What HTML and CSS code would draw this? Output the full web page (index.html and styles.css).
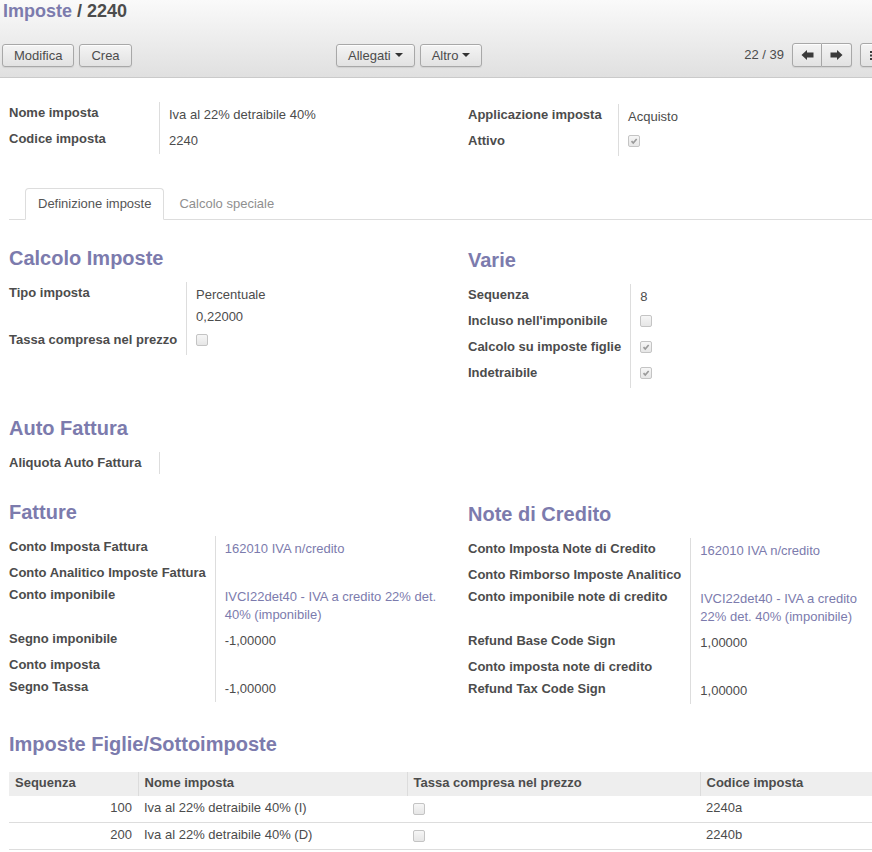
FILE: index.html
```html
<!DOCTYPE html>
<html lang="it">
<head>
<meta charset="utf-8">
<title>Imposte / 2240</title>
<link rel="stylesheet" href="styles.css">
</head>
<body>
<div class="header">
  <div class="header-inner">
    <h1 class="title"><a class="crumb">Imposte</a> / 2240</h1>
    <div class="toolbar">
      <div class="tb-left">
        <button class="btn">Modifica</button>
        <button class="btn">Crea</button>
      </div>
      <div class="tb-mid">
        <button class="btn">Allegati <span class="caret"></span></button>
        <button class="btn">Altro <span class="caret"></span></button>
      </div>
      <div class="tb-right">
        <span class="pager-val">22 / 39</span>
        <div class="btn-group">
          <button class="btn gbtn"><svg class="arrow" viewBox="0 0 12 10"><path d="M0 5 L5.5 0 L5.5 2.6 L12 2.6 L12 7.4 L5.5 7.4 L5.5 10 Z"/></svg></button>
          <button class="btn gbtn"><svg class="arrow" viewBox="0 0 12 10"><path d="M12 5 L6.5 0 L6.5 2.6 L0 2.6 L0 7.4 L6.5 7.4 L6.5 10 Z"/></svg></button>
        </div>
        <div class="btn-group">
          <button class="btn gbtn sw"><svg class="list" viewBox="0 0 10 9"><rect x="0" y="0" width="10" height="2"/><rect x="0" y="3.5" width="10" height="2"/><rect x="0" y="7" width="10" height="2"/></svg></button>
          <button class="btn gbtn sw"></button>
        </div>
      </div>
    </div>
  </div>
</div>

<div class="sheet">
  <div class="group2">
    <div class="col col-left">
      <div class="fields">
        <div class="lbl">Nome imposta</div><div class="val">Iva al 22% detraibile 40%</div>
        <div class="lbl">Codice imposta</div><div class="val">2240</div>
      </div>
    </div>
    <div class="col col-right">
      <div class="fields">
        <div class="lbl">Applicazione imposta</div><div class="val">Acquisto</div>
        <div class="lbl">Attivo</div><div class="val"><span class="cb on"><svg viewBox="0 0 12 12"><path d="M3 6.2 L5.1 8.4 L9.2 3.6"/></svg></span></div>
      </div>
    </div>
  </div>

  <ul class="tabs">
    <li class="tab active">Definizione imposte</li>
    <li class="tab">Calcolo speciale</li>
  </ul>

  <div class="page">
    <div class="group2">
      <div class="col col-left">
        <h2 class="sec-title">Calcolo Imposte</h2>
        <div class="fields">
          <div class="lbl">Tipo imposta</div>
          <div class="val val-tight"><div>Percentuale</div><div class="second">0,22000</div></div>
          <div class="lbl">Tassa compresa nel prezzo</div><div class="val"><span class="cb"></span></div>
        </div>
      </div>
      <div class="col col-right">
        <h2 class="sec-title">Varie</h2>
        <div class="fields">
          <div class="lbl">Sequenza</div><div class="val">8</div>
          <div class="lbl">Incluso nell'imponibile</div><div class="val"><span class="cb"></span></div>
          <div class="lbl">Calcolo su imposte figlie</div><div class="val"><span class="cb on"><svg viewBox="0 0 12 12"><path d="M3 6.2 L5.1 8.4 L9.2 3.6"/></svg></span></div>
          <div class="lbl">Indetraibile</div><div class="val"><span class="cb on"><svg viewBox="0 0 12 12"><path d="M3 6.2 L5.1 8.4 L9.2 3.6"/></svg></span></div>
        </div>
      </div>
    </div>

    <div class="section section-auto">
      <h2 class="sec-title">Auto Fattura</h2>
      <div class="fields">
        <div class="lbl">Aliquota Auto Fattura</div><div class="val"></div>
      </div>
    </div>

    <div class="group2 section section-inv">
      <div class="col col-left">
        <h2 class="sec-title">Fatture</h2>
        <div class="fields">
          <div class="lbl">Conto Imposta Fattura</div><div class="val"><a class="link">162010 IVA n/credito</a></div>
          <div class="lbl">Conto Analitico Imposte Fattura</div><div class="val"></div>
          <div class="lbl">Conto imponibile</div><div class="val"><a class="link">IVCI22det40 - IVA a credito 22% det. 40% (imponibile)</a></div>
          <div class="lbl">Segno imponibile</div><div class="val">-1,00000</div>
          <div class="lbl">Conto imposta</div><div class="val"></div>
          <div class="lbl">Segno Tassa</div><div class="val">-1,00000</div>
        </div>
      </div>
      <div class="col col-right">
        <h2 class="sec-title">Note di Credito</h2>
        <div class="fields">
          <div class="lbl">Conto Imposta Note di Credito</div><div class="val"><a class="link">162010 IVA n/credito</a></div>
          <div class="lbl">Conto Rimborso Imposte Analitico</div><div class="val"></div>
          <div class="lbl">Conto imponibile note di credito</div><div class="val"><a class="link">IVCI22det40 - IVA a credito 22% det. 40% (imponibile)</a></div>
          <div class="lbl">Refund Base Code Sign</div><div class="val">1,00000</div>
          <div class="lbl">Conto imposta note di credito</div><div class="val"></div>
          <div class="lbl">Refund Tax Code Sign</div><div class="val">1,00000</div>
        </div>
      </div>
    </div>

    <div class="section section-last">
      <h2 class="sec-title list-title">Imposte Figlie/Sottoimposte</h2>
      <table class="list">
        <colgroup><col class="c1"><col class="c2"><col class="c3"><col></colgroup>
        <thead>
          <tr><th>Sequenza</th><th>Nome imposta</th><th>Tassa compresa nel prezzo</th><th>Codice imposta</th></tr>
        </thead>
        <tbody>
          <tr><td class="num">100</td><td>Iva al 22% detraibile 40% (I)</td><td><span class="cb cb-list"></span></td><td>2240a</td></tr>
          <tr><td class="num">200</td><td>Iva al 22% detraibile 40% (D)</td><td><span class="cb cb-list"></span></td><td>2240b</td></tr>
        </tbody>
      </table>
    </div>
  </div>
</div>
</body>
</html>
```

FILE: styles.css
```css
* { box-sizing: border-box; }

html, body {
  margin: 0;
  padding: 0;
  overflow: hidden;
  background: #ffffff;
}

body {
  font-family: "Liberation Sans", Arial, sans-serif;
  font-size: 13px;
  line-height: 18px;
  color: #4c4c4c;
}

/* ---------- header ---------- */
.header {
  width: 100%;
  height: 78px;
  overflow: hidden;
  background: linear-gradient(to bottom, #fafafa, #e0e0e0);
  border-bottom: 1px solid #cacaca;
}

.header-inner {
  width: 916px;
  padding: 0 4px 0 2px;
}

.title {
  margin: 0 0 0 1px;
  font-size: 18px;
  line-height: 22px;
  font-weight: bold;
  color: #4c4c4c;
}

.crumb { color: #7c7bad; }

.toolbar {
  display: grid;
  grid-template-columns: 334px 1fr auto;
  align-items: center;
  margin-top: 21px;
  height: 23px;
}

.tb-left, .tb-mid {
  display: flex;
  gap: 5px;
}

.tb-right {
  display: flex;
  align-items: center;
}

.pager-val {
  margin-right: 8px;
  color: #4c4c4c;
}

.btn {
  height: 23px;
  padding: 0 11px;
  font-family: "Liberation Sans", Arial, sans-serif;
  font-size: 13px;
  color: #4c4c4c;
  background: linear-gradient(to bottom, #f4f4f4, #e2e2e2);
  border: 1px solid #a8a8a8;
  border-radius: 3px;
  box-shadow: 0 1px 1px rgba(0, 0, 0, 0.08), inset 0 1px 0 rgba(255, 255, 255, 0.8);
  display: inline-flex;
  align-items: center;
  gap: 4px;
}

.caret {
  display: inline-block;
  width: 0;
  height: 0;
  border-left: 4px solid transparent;
  border-right: 4px solid transparent;
  border-top: 4px solid #333;
}

.btn-group {
  display: flex;
  height: 24px;
}

.btn-group + .btn-group { margin-left: 8px; }

.gbtn {
  height: 24px;
  width: 30px;
  padding: 0;
  justify-content: center;
  border-radius: 0;
}

.gbtn:first-child { border-radius: 3px 0 0 3px; }
.gbtn:last-child { border-radius: 0 3px 3px 0; border-left: none; }

.sw { width: 26px; justify-content: flex-start; padding-left: 4px; }

.arrow { width: 13px; height: 10px; fill: #3a3a3a; }
.list { width: 10px; height: 9px; fill: #3a3a3a; }

/* ---------- sheet ---------- */
.sheet {
  padding: 24px 0 0 9px;
}

.group2 {
  display: grid;
  grid-template-columns: 459px 1fr;
}

.col-left { padding-right: 10px; }
.col-right { padding-top: 2px; }

.fields {
  display: grid;
  grid-template-columns: minmax(151px, max-content) 1fr;
}

.lbl {
  font-weight: bold;
  white-space: nowrap;
  padding: 2px 9px 2px 0;
  border-right: 1px solid #dddddd;
  color: #4c4c4c;
}

.val {
  padding: 4px 0 4px 9px;
  min-height: 22px;
}

.val-tight { padding-bottom: 3px; }
.val-tight .second { margin-top: 4px; }

.link {
  color: #7c7bad;
  text-decoration: none;
}

/* checkboxes */
.cb {
  display: block;
  width: 12px;
  height: 12px;
  margin: 1px 0 5px 0;
  border: 1px solid #c4c4c4;
  border-radius: 2px;
  background: linear-gradient(to bottom, #f6f6f6, #e6e6e6);
}

.cb svg {
  display: block;
  width: 10px;
  height: 10px;
  fill: none;
  stroke: #9a9a9a;
  stroke-width: 2;
}

.cb-list { margin: 2px 0 0 0; }

/* ---------- tabs ---------- */
.tabs {
  display: flex;
  list-style: none;
  margin: 32px 0 0 0;
  padding: 0 0 0 16px;
  border-bottom: 1px solid #dddddd;
}

.tab {
  padding: 6px 12px;
  line-height: 18px;
  border: 1px solid transparent;
  border-radius: 4px 4px 0 0;
  margin: 0 2px -1px 0;
  color: #8f8f8f;
}

.tab.active {
  color: #555555;
  background: #ffffff;
  border-color: #dddddd #dddddd transparent;
}

/* ---------- page ---------- */
.page { padding-top: 26px; }

.sec-title {
  margin: 0 0 12px 0;
  font-size: 20px;
  line-height: 24px;
  font-weight: bold;
  color: #7c7bad;
}

.section-auto { margin-top: 28px; }
.section-inv { margin-top: 26px; }
.section-last { margin-top: 28px; }

.list-title { margin-bottom: 16px; }

/* ---------- list ---------- */
.list {
  width: 100%;
  table-layout: fixed;
  border-collapse: collapse;
}

.list .c1 { width: 129px; }
.list .c2 { width: 269px; }
.list .c3 { width: 293px; }

.list th {
  text-align: left;
  font-weight: bold;
  background: #eeeeee;
  padding: 2px 6px 4px 6px;
  line-height: 18px;
  white-space: nowrap;
}

.list th + th { border-left: 1px solid #dcdcdc; }

.list td {
  padding: 3px 6px 5px 6px;
  line-height: 18px;
  border-bottom: 1px solid #dddddd;
  white-space: nowrap;
}

.list td.num { text-align: right; }
```
